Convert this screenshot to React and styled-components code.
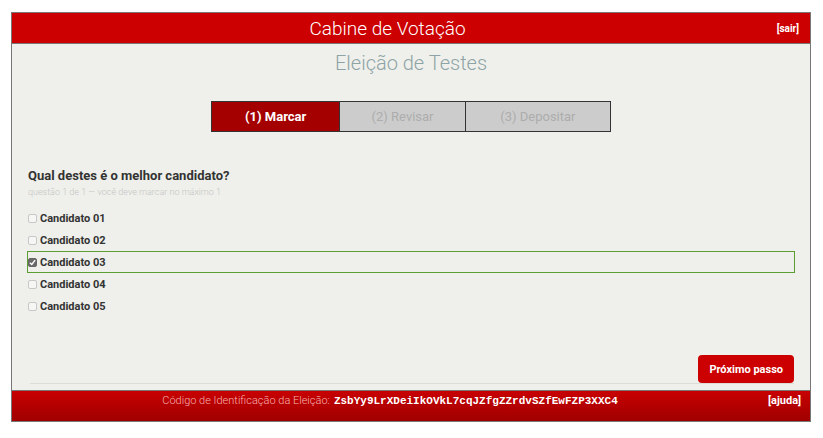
import React, { useState } from "react";
import styled, { createGlobalStyle } from "styled-components";

const GlobalStyle = createGlobalStyle`
  html, body {
    margin: 0;
    padding: 0;
    background: #ffffff;
    font-family: Roboto, "Liberation Sans", sans-serif;
  }
`;

const Page = styled.div`
  padding: 12px 0 0 11px;
`;

const Frame = styled.div`
  width: 798px;
  border: 1px solid #777;
  background: #eff0eb;
  display: flex;
  flex-direction: column;
`;

const Header = styled.header`
  height: 30px;
  background: #cc0000;
  border-bottom: 1px solid #777;
  display: flex;
  align-items: center;
`;

const Title = styled.h1`
  flex: 1;
  margin: 0;
  text-align: center;
  color: #fff;
  font-weight: 300;
  font-size: 19px;
`;

const SideLink = styled.a`
  width: ${props => props.w}px;
  padding-right: ${props => props.pad}px;
  text-align: right;
  color: #fff;
  font-weight: 700;
  font-size: ${props => props.size}px;
  text-decoration: none;
`;

const Main = styled.main`
  height: 346px;
  display: flex;
  flex-direction: column;
  padding: 0 16px;
`;

const Election = styled.h2`
  margin: 6px 0 0;
  text-align: center;
  font-weight: 300;
  font-size: 20px;
  color: #8ea3a6;
  line-height: 26px;
`;

const Steps = styled.div`
  display: flex;
  width: 400px;
  margin: 25px auto 0;
  border: 1px solid #333;
  box-sizing: border-box;
`;

const Step = styled.div`
  width: ${props => props.w}px;
  height: 29px;
  display: flex;
  align-items: center;
  justify-content: center;
  font-size: 13px;
  font-weight: ${props => (props.active ? 700 : 400)};
  color: ${props => (props.active ? "#fff" : "#adadad")};
  background: ${props => (props.active ? "#a50000" : "#cccccc")};
  & + & {
    border-left: 1px solid #333;
  }
`;

const Question = styled.h3`
  margin: 36px 0 0;
  font-size: 13px;
  font-weight: 700;
  color: #333;
`;

const Hint = styled.div`
  margin-top: 4px;
  font-size: 9px;
  font-weight: 300;
  color: #c4c4c4;
`;

const Answers = styled.div`
  margin-top: 10px;
  display: flex;
  flex-direction: column;
`;

const Answer = styled.label`
  height: 22px;
  box-sizing: border-box;
  display: flex;
  align-items: center;
  gap: 3px;
  font-size: 11px;
  font-weight: 700;
  color: #333;
  border: 1px solid ${props => (props.checked ? "#5b9e34" : "transparent")};
  margin: 0 -1px 0 -1px;
  cursor: pointer;
`;

const Box = styled.span`
  width: 9px;
  height: 9px;
  border-radius: 2px;
  box-sizing: border-box;
  border: 1px solid ${props => (props.checked ? "#666" : "#c8c8c8")};
  background: ${props => (props.checked ? "#6a6a6a" : "#f6f6f4")};
  display: flex;
  align-items: center;
  justify-content: center;
`;

const Actions = styled.div`
  margin-top: auto;
  display: flex;
  justify-content: flex-end;
  border-bottom: 1px solid #dcdcd8;
  margin-left: 2px;
  margin-bottom: 6px;
`;

const NextButton = styled.button`
  height: 28px;
  padding: 0 11px;
  border: none;
  border-radius: 4px;
  background: #cc0000;
  color: #fff;
  font-family: Roboto, "Liberation Sans", sans-serif;
  font-weight: 700;
  font-size: 11px;
  cursor: pointer;
`;

const Footer = styled.footer`
  height: 31px;
  border-top: 1px solid #777;
  background: linear-gradient(#c80000, #a00000);
  display: flex;
  align-items: flex-start;
  padding-top: 3px;
  box-sizing: border-box;
  font-size: 11px;
`;

const FooterText = styled.div`
  flex: 1;
  text-align: center;
`;

const FooterLabel = styled.span`
  color: #f7b3b3;
  font-weight: 300;
`;

const Code = styled.span`
  margin-left: 4px;
  color: #fff;
  font-family: "Liberation Mono", monospace;
  font-weight: 700;
  font-size: 11px;
`;

const candidates = ["Candidato 01", "Candidato 02", "Candidato 03", "Candidato 04", "Candidato 05"];

export default function App() {
  const [selected, setSelected] = useState(2);

  return (
    <Page>
      <GlobalStyle />
      <Frame>
        <Header>
          <Title>Cabine de Votação</Title>
          <SideLink href="#" w={36} pad={11} size={10}>[sair]</SideLink>
        </Header>
        <Main>
          <Election>Eleição de Testes</Election>
          <Steps>
            <Step w={128} active>(1) Marcar</Step>
            <Step w={125}>(2) Revisar</Step>
            <Step w={145}>(3) Depositar</Step>
          </Steps>
          <Question>Qual destes é o melhor candidato?</Question>
          <Hint>questão 1 de 1 — você deve marcar no máximo 1</Hint>
          <Answers>
            {candidates.map((name, i) => (
              <Answer key={name} checked={selected === i} onClick={() => setSelected(i)}>
                <Box checked={selected === i}>
                  {selected === i && (
                    <svg width="7" height="7" viewBox="0 0 8 8">
                      <path d="M1 4.2 L3.2 6.3 L7 1.2" fill="none" stroke="#fff" strokeWidth="1.6" />
                    </svg>
                  )}
                </Box>
                {name}
              </Answer>
            ))}
          </Answers>
          <Actions>
            <NextButton>Próximo passo</NextButton>
          </Actions>
        </Main>
        <Footer>
          <FooterText>
            <FooterLabel>Código de Identificação da Eleição:</FooterLabel>
            <Code>ZsbYy9LrXDeiIkOVkL7cqJZfgZZrdvSZfEwFZP3XXC4</Code>
          </FooterText>
          <SideLink href="#" w={32} pad={10} size={11}>[ajuda]</SideLink>
        </Footer>
      </Frame>
    </Page>
  );
}
